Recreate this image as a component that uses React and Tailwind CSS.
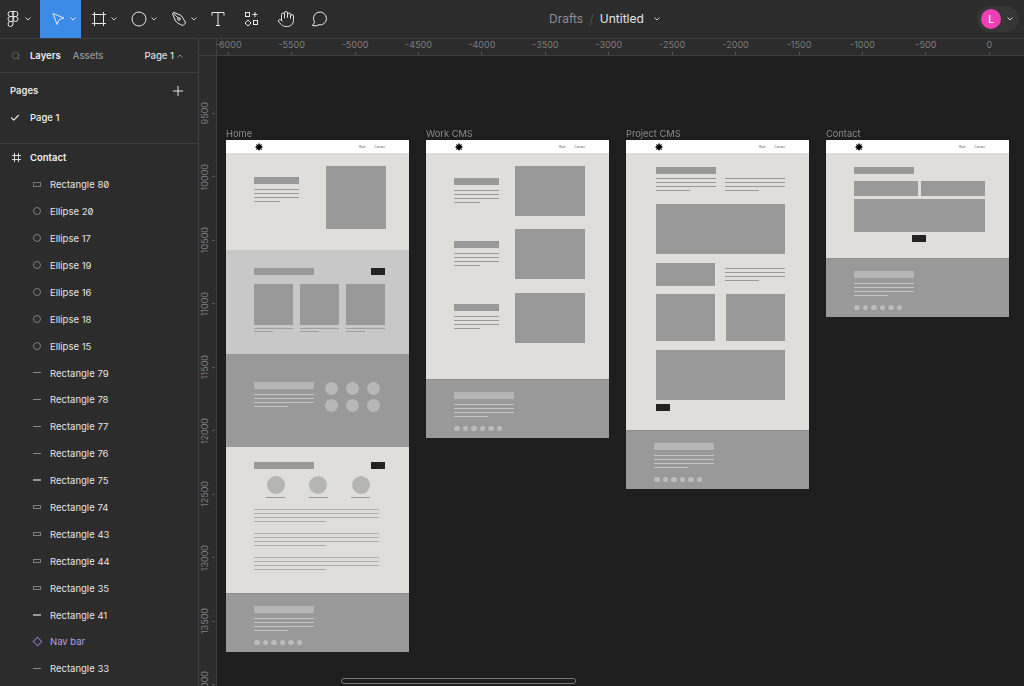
import React from "react";
import { Hand, Search, Plus, Check } from "lucide-react";

const Chevron = ({ up, cls = "text-[#d8d8d8]" }) => (
  <svg width="6" height="4" viewBox="0 0 6 4" fill="none" stroke="currentColor" strokeWidth="1" className={`shrink-0 ${cls}`}>
    <path d={up ? "M.5 3.5 3 1l2.5 2.5" : "M.5 .5 3 3 5.5 .5"} />
  </svg>
);

const Ico = ({ children }) => (
  <svg width="16" height="16" viewBox="0 0 16 16" fill="none" stroke="currentColor" strokeWidth="1" className="shrink-0">
    {children}
  </svg>
);

const Tool = ({ children, active, chevron = true, cls = "w-[40px] pl-[10px]" }) => (
  <div className={`flex h-full items-center gap-[4px] text-[#e8e8e8] ${cls} ${active ? "bg-[#3c8ce7]" : ""}`}>
    {children}
    {chevron && <Chevron cls={active ? "text-white" : "text-[#d0d0d0]"} />}
  </div>
);

function TopBar() {
  return (
    <div className="flex h-[39px] shrink-0 items-stretch border-b border-[#404040] bg-[#2c2c2c]">
      <Tool cls="w-[40px] pl-[5px]">
        <Ico>
          <g transform="translate(2.5 0)">
            <path d="M5.5 .5H3a2.5 2.5 0 0 0 0 5h2.5z" />
            <path d="M5.5 .5H8a2.5 2.5 0 0 1 0 5H5.5z" />
            <path d="M5.5 5.5H3a2.5 2.5 0 0 0 0 5h2.5z" />
            <circle cx="8" cy="8" r="2.5" />
            <path d="M3 10.5h2.5V13A2.5 2.5 0 1 1 3 10.5z" />
          </g>
        </Ico>
      </Tool>
      <Tool active cls="w-[41px] pl-[10px]">
        <Ico>
          <path d="M3 2.5 14 7l-4.8 1.6L7 13.5z" />
        </Ico>
      </Tool>
      <Tool>
        <Ico>
          <path d="M3.5 1v14M12.5 1v14M1 3.5h14M1 12.5h14" />
        </Ico>
      </Tool>
      <Tool>
        <Ico>
          <circle cx="8" cy="8" r="7" />
        </Ico>
      </Tool>
      <Tool>
        <Ico>
          <path d="M1.5 2.6 2.8 1.3 10 4.4c1.6 2 3.2 4.8 4.6 7.6L12 14.6C9 13.4 6.4 12 4.6 10.2z" />
          <path d="M2.2 2 7 6.8" />
          <circle cx="8" cy="8" r="1.3" />
        </Ico>
      </Tool>
      <Tool chevron={false} cls="w-[34px] pl-[9px]">
        <Ico>
          <path d="M2 4.5V1.5h12v3M8 1.5v13M6 14.5h4" />
        </Ico>
      </Tool>
      <Tool chevron={false} cls="w-[34px] pl-[9px]">
        <Ico>
          <rect x="1.5" y="1.5" width="4" height="4" />
          <path d="M11 1v5M8.5 3.5h5" />
          <path d="M4 9l3 3-3 3-3-3z" />
          <rect x="9.5" y="9.5" width="4" height="4" />
        </Ico>
      </Tool>
      <Tool chevron={false} cls="w-[33px] pl-[8px]">
        <Hand size={18} strokeWidth={1.25} />
      </Tool>
      <Tool chevron={false} cls="w-[34px] pl-[9px]">
        <Ico>
          <path d="M1.5 14.7 3.6 11.2A6.5 6.5 0 1 1 7 13.7L6.6 14.7z" />
        </Ico>
      </Tool>
      <div className="ml-[213px] flex items-center font-['Inter',sans-serif] text-[12px]">
        <span className="text-[#8f8f8f]">Drafts</span>
        <span className="mx-[6px] text-[14px] font-extralight text-[#666]">/</span>
        <span className="text-[#e6e6e6]">Untitled</span>
        <span className="ml-[10px]">
          <Chevron />
        </span>
      </div>
      <div className="ml-auto mr-[5px] flex items-center">
        <div className="flex h-[26px] w-[42px] items-center gap-[6px] rounded-full bg-[#363636] pl-[4px]">
          <div className="flex h-[20px] w-[20px] items-center justify-center rounded-full bg-[#ee3fb4] font-['Inter',sans-serif] text-[10px] font-medium text-white">
            L
          </div>
          <Chevron />
        </div>
      </div>
    </div>
  );
}

const layers = [
  ["rect", "Rectangle 80"],
  ["ellipse", "Ellipse 20"],
  ["ellipse", "Ellipse 17"],
  ["ellipse", "Ellipse 19"],
  ["ellipse", "Ellipse 16"],
  ["ellipse", "Ellipse 18"],
  ["ellipse", "Ellipse 15"],
  ["line", "Rectangle 79"],
  ["line", "Rectangle 78"],
  ["line", "Rectangle 77"],
  ["line", "Rectangle 76"],
  ["thick", "Rectangle 75"],
  ["slim", "Rectangle 74"],
  ["slim", "Rectangle 43"],
  ["slim", "Rectangle 44"],
  ["slim", "Rectangle 35"],
  ["thick", "Rectangle 41"],
  ["comp", "Nav bar"],
  ["line", "Rectangle 33"],
];

const LayerIcon = ({ type }) => {
  if (type === "rect") return <div className="h-[5px] w-[8px] border border-[#777]" />;
  if (type === "ellipse") return <div className="h-[8px] w-[8px] rounded-full border border-[#808080]" />;
  if (type === "line") return <div className="h-px w-[8px] bg-[#8a8a8a]" />;
  if (type === "thick") return <div className="h-[2px] w-[8px] bg-[#9a9a9a]" />;
  if (type === "slim") return <div className="h-[4px] w-[8px] border border-[#808080]" />;
  return <div className="ml-px h-[7px] w-[7px] rotate-45 border border-[#8a6fc0]" />;
};

function Sidebar() {
  return (
    <div className="flex w-[199px] shrink-0 flex-col overflow-hidden border-r border-[#404040] bg-[#2c2c2c] font-['Inter',sans-serif] text-[9.5px]">
      <div className="flex h-[34px] shrink-0 items-center border-b border-[#404040] pl-[11px]">
        <Search size={10} strokeWidth={1.25} className="text-[#8a8a8a]" />
        <span className="ml-[9px] translate-y-px font-semibold text-[#eeeeee]">Layers</span>
        <span className="ml-[12px] translate-y-px font-medium text-[#9a9a9a]">Assets</span>
        <span className="ml-[41px] translate-y-px font-medium text-[#dedede]">Page 1</span>
        <span className="ml-[3px]">
          <Chevron up cls="text-[#8a8a8a]" />
        </span>
      </div>
      <div className="flex h-[71px] shrink-0 flex-col border-b border-[#404040]">
        <div className="flex h-[35px] items-center justify-between pl-[10px] pr-[12px]">
          <span className="translate-y-px font-semibold text-[#e6e6e6]">Pages</span>
          <Plus size={16} strokeWidth={1.5} className="text-[#e6e6e6]" />
        </div>
        <div className="flex h-[19px] items-center pl-[10px]">
          <Check size={10} strokeWidth={3} className="text-[#e6e6e6]" />
          <span className="ml-[10px] translate-y-px font-medium text-[#f0f0f0]">Page 1</span>
        </div>
      </div>
      <div className="flex h-[27px] shrink-0 items-center pl-[12px] text-[#f0f0f0]">
        <svg width="9" height="9" viewBox="0 0 9 9" fill="none" stroke="#d8d8d8" strokeWidth="1">
          <path d="M2.5 0v9M6.5 0v9M0 2.5h9M0 6.5h9" />
        </svg>
        <span className="ml-[9px] translate-y-px font-semibold">Contact</span>
      </div>
      {layers.map(([type, name], i) => (
        <div key={i} className="flex h-[26.9px] shrink-0 items-center">
          <div className="flex w-[50px] items-center pl-[33px]">
            <LayerIcon type={type} />
          </div>
          <span className={`translate-y-px slashed-zero ${type === "comp" ? "text-[#b69ce8]" : "text-[#e4e4e4]"}`}>{name}</span>
        </div>
      ))}
    </div>
  );
}

const xTicks = ["-6000", "-5500", "-5000", "-4500", "-4000", "-3500", "-3000", "-2500", "-2000", "-1500", "-1000", "-500", "0"];
const yTicks = ["9500", "10000", "10500", "11000", "11500", "12000", "12500", "13000", "13500", "14000"];

function HRuler() {
  return (
    <div className="flex h-[17px] shrink-0 border-b border-[#404040] bg-[#2c2c2c]">
      <div className="w-[18px] shrink-0 border-r border-[#404040]" />
      <div className="flex flex-1 overflow-hidden">
        {xTicks.map((t, i) => (
          <div key={t} className={`flex w-[63.43px] shrink-0 flex-col items-center ${i === 0 ? "ml-[-20.5px]" : ""}`}>
            <span className="text-[9px] leading-[12px] text-[#7d7d7d]">{t}</span>
            <div className="mt-px h-[3px] w-px bg-[#5a5a5a]" />
          </div>
        ))}
      </div>
    </div>
  );
}

function VRuler() {
  return (
    <div className="w-[18px] shrink-0 overflow-hidden border-r border-[#404040] bg-[#2c2c2c] pt-[25.5px]">
      {yTicks.map((t) => (
        <div key={t} className="flex h-[63.5px] items-center justify-end">
          <span className="rotate-180 text-[9px] leading-[11px] text-[#7d7d7d] [writing-mode:vertical-rl]">{t}</span>
          <div className="ml-[2px] mr-px h-px w-[3px] bg-[#5a5a5a]" />
        </div>
      ))}
    </div>
  );
}

const Lines = ({ w, last, tone = "bg-[#999997]" }) => (
  <div className={`flex flex-col gap-[3px] ${w}`}>
    <div className={`h-px w-full ${tone}`} />
    <div className={`h-px w-full ${tone}`} />
    <div className={`h-px w-full ${tone}`} />
    <div className={`h-px ${last} ${tone}`} />
  </div>
);

const Nav = () => (
  <div className="flex h-[13px] shrink-0 items-center justify-between bg-white pl-[29px] pr-[24px]">
    <svg width="8" height="8" viewBox="0 0 8 8" stroke="#000" strokeWidth="0.7">
      <circle cx="4" cy="4" r="2.8" fill="#000" stroke="none" />
      <path d="M4 0v8M0 4h8M1.2 1.2l5.6 5.6M6.8 1.2 1.2 6.8" />
    </svg>
    <div className="flex gap-[9px] text-[2.8px] leading-[4px] text-[#555]">
      <span>Work</span>
      <span>Contact</span>
    </div>
  </div>
);

const Footer = () => (
  <div className="flex h-[59px] shrink-0 flex-col border-t border-[#8f8f8f] bg-[#999999] pl-[28px] pt-[12px]">
    <div className="h-[7px] w-[60px] bg-[#b6b6b6]" />
    <div className="mt-[5px]">
      <Lines w="w-[60px]" last="w-[34px]" tone="bg-[#c4c4c4]" />
    </div>
    <div className="mt-[8.5px] flex gap-[3px]">
      <div className="h-[5.5px] w-[5.5px] rounded-full bg-[#bcbcbc]" />
      <div className="h-[5.5px] w-[5.5px] rounded-full bg-[#bcbcbc]" />
      <div className="h-[5.5px] w-[5.5px] rounded-full bg-[#bcbcbc]" />
      <div className="h-[5.5px] w-[5.5px] rounded-full bg-[#bcbcbc]" />
      <div className="h-[5.5px] w-[5.5px] rounded-full bg-[#bcbcbc]" />
      <div className="h-[5.5px] w-[5.5px] rounded-full bg-[#bcbcbc]" />
    </div>
  </div>
);

const Heading = ({ w = "w-[60px]" }) => <div className={`h-[7px] bg-[#999999] ${w}`} />;
const Btn = () => <div className="h-[7px] w-[14px] bg-[#222222]" />;
const HeadRow = () => (
  <div className="flex w-[131px] justify-between">
    <Heading />
    <Btn />
  </div>
);

const Frame = ({ label, left, children }) => (
  <div className={`absolute top-[70px] w-[183px] blur-[0.3px] ${left}`}>
    <div className="h-[14px] translate-y-px font-['Inter',sans-serif] text-[9.3px] leading-[14px] text-[#8a8a8a]">{label}</div>
    <div className="flex flex-col">
      <Nav />
      {children}
      <Footer />
    </div>
  </div>
);

const Card = () => (
  <div className="w-[39px]">
    <div className="h-[41px] bg-[#999999]" />
    <div className="mt-[3px] h-px w-full bg-[#a0a0a0]" />
    <div className="mt-[2px] h-px w-[19px] bg-[#a0a0a0]" />
  </div>
);

const Person = () => (
  <div className="flex w-[19px] flex-col items-center">
    <div className="h-[18px] w-[18px] rounded-full bg-[#b5b5b3]" />
    <div className="mt-[3px] h-px w-[19px] bg-[#999997]" />
  </div>
);

const HomeFrame = () => (
  <Frame label="Home" left="left-[9px]">
    <div className="flex h-[97px] bg-[#dfdedb] pl-[28px]">
      <div className="mt-[24px] w-[45px]">
        <Heading w="w-[45px]" />
        <div className="mt-[5px]">
          <Lines w="w-[45px]" last="w-[26px]" />
        </div>
      </div>
      <div className="ml-[27px] mt-[13px] h-[63px] w-[60px] bg-[#999999]" />
    </div>
    <div className="h-[104px] bg-[#c8c8c8] pl-[28px] pt-[18px]">
      <HeadRow />
      <div className="mt-[9px] flex gap-[7px]">
        <Card />
        <Card />
        <Card />
      </div>
    </div>
    <div className="flex h-[93px] bg-[#999999] pl-[28px] pt-[28px]">
      <div className="w-[60px]">
        <div className="h-[7px] bg-[#b6b6b6]" />
        <div className="mt-[5px]">
          <Lines w="w-[60px]" last="w-[34px]" tone="bg-[#c4c4c4]" />
        </div>
      </div>
      <div className="ml-[10.5px] grid h-fit grid-cols-[13px_13px_13px] gap-x-[8px] gap-y-[4px]">
        <div className="h-[13px] rounded-full bg-[#b8b8b8]" />
        <div className="h-[13px] rounded-full bg-[#b8b8b8]" />
        <div className="h-[13px] rounded-full bg-[#b8b8b8]" />
        <div className="h-[13px] rounded-full bg-[#b8b8b8]" />
        <div className="h-[13px] rounded-full bg-[#b8b8b8]" />
        <div className="h-[13px] rounded-full bg-[#b8b8b8]" />
      </div>
    </div>
    <div className="h-[146px] bg-[#dfdedb] pl-[28px] pt-[15px]">
      <HeadRow />
      <div className="ml-[12px] mt-[7px] flex gap-[23.5px]">
        <Person />
        <Person />
        <Person />
      </div>
      <div className="mt-[11px] flex flex-col gap-[11px]">
        <Lines w="w-[125px]" last="w-[72px]" tone="bg-[#adadaa]" />
        <Lines w="w-[125px]" last="w-[72px]" tone="bg-[#adadaa]" />
        <Lines w="w-[125px]" last="w-[72px]" tone="bg-[#adadaa]" />
      </div>
    </div>
  </Frame>
);

const WorkRow = () => (
  <div className="flex h-[50px] pl-[28px]">
    <div className="w-[45px] pt-[11.5px]">
      <Heading w="w-[45px]" />
      <div className="mt-[5px]">
        <Lines w="w-[45px]" last="w-[26px]" />
      </div>
    </div>
    <div className="ml-[16px] h-[50px] w-[70px] bg-[#999999]" />
  </div>
);

const WorkFrame = () => (
  <Frame label="Work CMS" left="left-[209px]">
    <div className="flex h-[226px] flex-col gap-[13.3px] bg-[#dfdedb] pt-[13px]">
      <WorkRow />
      <WorkRow />
      <WorkRow />
    </div>
  </Frame>
);

const ProjectFrame = () => (
  <Frame label="Project CMS" left="left-[409px]">
    <div className="h-[277px] bg-[#dfdedb] pl-[30px] pt-[14px]">
      <Heading />
      <div className="mt-[4px] flex gap-[9px]">
        <Lines w="w-[60px]" last="w-[34px]" />
        <Lines w="w-[60px]" last="w-[34px]" />
      </div>
      <div className="mt-[13px] h-[50px] w-[129px] bg-[#999999]" />
      <div className="mt-[9px] flex gap-[10px]">
        <div className="h-[23px] w-[59px] bg-[#999999]" />
        <div className="pt-[5px]">
          <Lines w="w-[60px]" last="w-[34px]" />
        </div>
      </div>
      <div className="mt-[8px] flex gap-[11px]">
        <div className="h-[47px] w-[59px] bg-[#999999]" />
        <div className="h-[47px] w-[59px] bg-[#999999]" />
      </div>
      <div className="mt-[9px] h-[50px] w-[129px] bg-[#999999]" />
      <div className="mt-[4px]">
        <Btn />
      </div>
    </div>
  </Frame>
);

const ContactFrame = () => (
  <Frame label="Contact" left="left-[609px]">
    <div className="h-[105px] bg-[#dfdedb] pl-[28px] pt-[14px]">
      <Heading />
      <div className="mt-[7px] flex gap-[3px]">
        <div className="h-[15px] w-[64px] bg-[#999999]" />
        <div className="h-[15px] w-[64px] bg-[#999999]" />
      </div>
      <div className="mt-[3px] h-[33px] w-[131px] bg-[#999999]" />
      <div className="ml-[58px] mt-[3px]">
        <Btn />
      </div>
    </div>
  </Frame>
);

export default function App() {
  return (
    <div className="flex h-[686px] w-[1024px] flex-col overflow-hidden bg-[#1e1e1e] font-['Inter',sans-serif] blur-[0.25px]">
      <TopBar />
      <div className="flex min-h-0 flex-1">
        <Sidebar />
        <div className="flex min-w-0 flex-1 flex-col">
          <HRuler />
          <div className="flex min-h-0 flex-1">
            <VRuler />
            <div className="relative flex-1 overflow-hidden bg-[#1e1e1e]">
              <HomeFrame />
              <WorkFrame />
              <ProjectFrame />
              <ContactFrame />
              <div className="absolute left-[124px] top-[622px] h-[6px] w-[235px] rounded-full border border-[#777]" />
            </div>
          </div>
        </div>
      </div>
    </div>
  );
}
